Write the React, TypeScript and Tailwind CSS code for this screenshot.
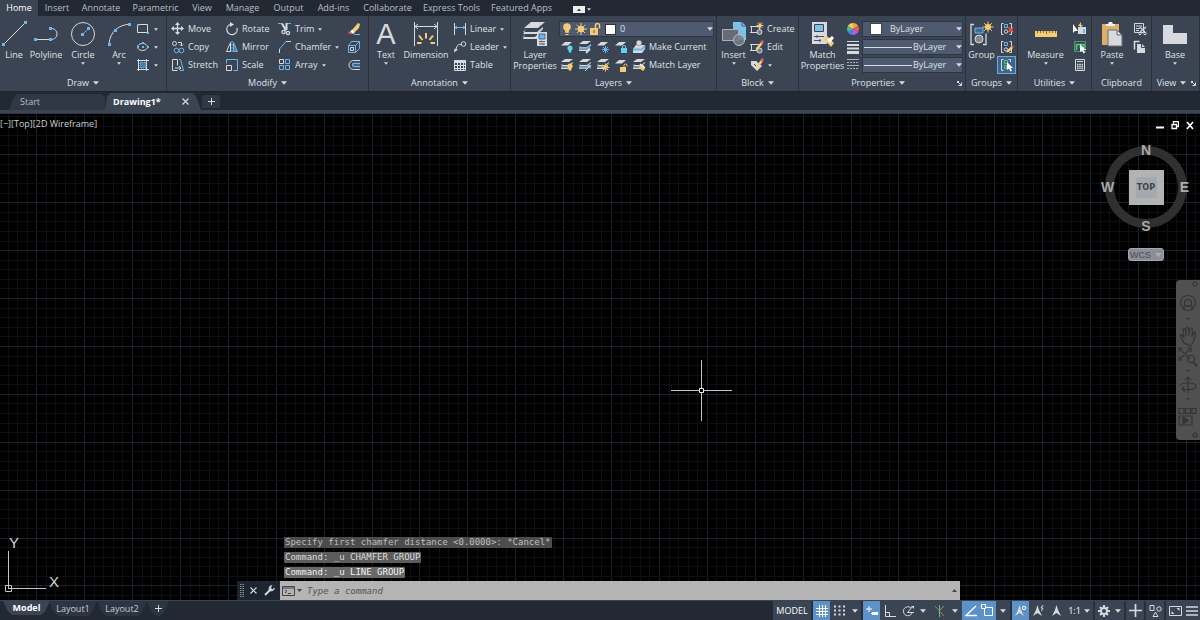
import React from 'react';

const W = '#d6d9dd';
const B = '#6fb5ea';
const Y = '#f6cb74';
const G = '#4ecb7d';

type IconProps = { w?: number; h?: number; children: React.ReactNode };

const Ico: React.FC<IconProps> = ({ w = 14, h = 14, children }) => (
  <svg width={w} height={h} viewBox={`0 0 ${w} ${h}`} fill="none" stroke={W} strokeWidth={1} className="shrink-0" aria-hidden="true">
    {children}
  </svg>
);

const Caret: React.FC<{ big?: boolean }> = ({ big }) => (
  <svg width={big ? 6 : 4} height={big ? 4 : 3} viewBox="0 0 6 3.5" className="shrink-0 fill-[#d6d9dd]" aria-hidden="true">
    <path d="M0 0h6L3 3.5z" />
  </svg>
);

const Launcher = () => (
  <Ico w={5} h={5}>
    <path d="M0 .5h2M.5 0v2M1 1l3 3M4.500 1.500V4.500H1.500" />
  </Ico>
);

/* ---------- small ribbon icons ---------- */

const dot = (x: number, y: number, s = 2) => <rect x={x - s / 2} y={y - s / 2} width={s} height={s} fill={B} stroke="none" />;

const sun = (cx: number, cy: number, r: number) => (
  <g stroke={Y}>
    <circle cx={cx} cy={cy} r={r * 0.55} fill={Y} stroke="none" />
    <path
      d={[0, 45, 90, 135, 180, 225, 270, 315]
        .map((a) => {
          const c = Math.cos((a * Math.PI) / 180);
          const s = Math.sin((a * Math.PI) / 180);
          return `M${cx + c * r * 0.5} ${cy + s * r * 0.5}L${cx + c * r} ${cy + s * r}`;
        })
        .join('')}
    />
  </g>
);

const stack = (
  <g fill={W} stroke="none">
    <path d="M5 1h8L9 4H1z" />
    <path d="M3 5.500 1 7h8l4-3v1L9 8.500H1z" />
    <path d="M1 9.500h8l3-2.500v1.500L9 11H1z" />
  </g>
);

const sheet = <path d="M5 2h7L8 5.500H1z" fill={W} stroke="none" />;

const bulb = (x: number, y: number, c: string, r = 2.6) => (
  <g fill={c} stroke="none">
    <circle cx={x} cy={y} r={r} />
    <rect x={x - r / 2} y={y + r - 1} width={r} height="3" />
  </g>
);

const lock = (x: number, y: number, c: string, open = false) => (
  <g stroke={c}>
    <rect x={x} y={y} width="6" height="5" fill={c} stroke="none" />
    <path d={open ? `M${x + 4} ${y}v-1.500a1.500 1.500 0 0 1 3 0v1` : `M${x + 1.5} ${y}v-1a1.500 1.500 0 0 1 3 0v1`} />
  </g>
);

const RectIcon = () => (
  <Ico>
    <path d="M1.500 2.500h10v8h-10z" />
    {dot(2, 3)}
    {dot(12, 11)}
  </Ico>
);

const EllipseIcon = () => (
  <Ico>
    <ellipse cx="6.500" cy="7" rx="5" ry="3.500" />
    {dot(2, 7)}
    {dot(12, 7)}
    {dot(7, 7)}
    {dot(7, 3)}
  </Ico>
);

const HatchIcon = () => (
  <Ico>
    <path d="M2.500 1v12M10.500 1v12M1 2.500h12M1 11.500h12" />
    <path d="M4 4h6v6H4z" fill="#4d7fab" stroke={B} strokeDasharray="1 1" />
  </Ico>
);

const MoveIcon = () => (
  <Ico>
    <path d="M6.500 2v10M2 6.500h10" strokeWidth="1.300" />
    <path d="M6.500 0 9 3H4zM6.500 13 9 10H4zM0 6.500 3 4v5zM13 6.500 10 4v5z" fill={W} stroke="none" />
  </Ico>
);

const CopyIcon = () => (
  <Ico>
    <circle cx="3.500" cy="3.500" r="2" />
    <path d="M7 2.500h3.500V6M9 4.500 10.500 6 12 4.500" />
    <circle cx="5.500" cy="10.500" r="2.300" stroke={B} />
    <circle cx="10.500" cy="10.500" r="2.300" stroke={B} />
  </Ico>
);

const StretchIcon = () => (
  <Ico>
    <path d="M1.500 1.500h5v6M1.500 1.500v11h5M4 10h6M8 8l2 2-2 2" />
    <path d="M8 1.500h1.500l3 11H9" stroke={B} />
  </Ico>
);

const RotateIcon = () => (
  <Ico>
    <path d="M5 2.500A5.200 5.200 0 1 0 12 6" strokeWidth="1.300" />
    <path d="M5 0v5l4-2.500z" fill={W} stroke="none" />
  </Ico>
);

const MirrorIcon = () => (
  <Ico>
    <path d="M5.500 2.500v9h-4z" />
    <path d="M8.500 2.500v9h4z" stroke={B} fill="#4d7fab" />
    <path d="M7 1v12" stroke={B} strokeDasharray="2 1" />
  </Ico>
);

const ScaleIcon = () => (
  <Ico>
    <path d="M1.500 5.500v-4h11v11h-4" stroke={B} />
    <path d="M1.500 7.500h5v5h-5z" />
  </Ico>
);

const TrimIcon = () => (
  <Ico>
    <path d="M0 1.500h4M9 1.500h4" stroke={B} />
    <path d="m4 1.500 4 7M8.500 1v7" strokeWidth="2" />
    <circle cx="5.500" cy="10" r="1.600" strokeWidth="1.300" />
    <circle cx="10" cy="11" r="1.600" strokeWidth="1.300" />
  </Ico>
);

const ChamferIcon = () => (
  <Ico>
    <path d="M1.500 13V9M8 1.500h5" />
    <path d="M1.500 9 8 1.500" stroke={B} />
  </Ico>
);

const ArrayIcon = () => (
  <Ico>
    <path d="M1.500 1.500h4v4h-4z" />
    <path d="M7.500 1.500h4v4h-4zM1.500 7.500h4v4h-4zM7.500 7.500h4v4h-4z" stroke={B} />
  </Ico>
);

const EraseIcon = () => (
  <Ico>
    <path d="m5 8 6-7 2 1-1 4-4 4z" fill={Y} stroke="none" />
    <path d="m5 7.500 3 2.500-2 2-4-1z" fill="#fff" stroke="none" />
    <path d="m3 9 3 3H3l-2-1z" fill="#e65c5c" stroke="none" />
    <path d="M7 12.500h6" stroke={B} />
  </Ico>
);

const ExplodeIcon = () => (
  <Ico>
    <path d="M1.500 5.500h7v7h-7zM4.500 1.500h8v7l-4 4M1.500 5.500l3-4M8.500 5.500l4-4" stroke={B} />
    <path d="M3.500 7.500h3v3h-3z" />
  </Ico>
);

const OffsetIcon = () => (
  <Ico>
    <path d="M13 2.500H6.500a4.500 4.500 0 0 0 0 9H13" />
    <path d="M13 5.500H7a1.500 1.500 0 0 0 0 3h6" stroke={B} strokeWidth="1.300" />
  </Ico>
);

const LinearIcon = () => (
  <Ico>
    <path d="M1.500 1v12M12.500 1v12" />
    <path d="M2 5.500h10M4 4 2 5.500 4 7M10 4l2 1.500L10 7" stroke={B} />
  </Ico>
);

const LeaderIcon = () => (
  <Ico>
    <circle cx="10.500" cy="4" r="2.300" />
    <path d="M8 4.500C5 4 4 5 3 10" />
    <path d="m1 12.500.5-4 3.500 1z" fill={W} stroke="none" />
  </Ico>
);

const TableIcon = () => (
  <Ico>
    <path d="M1.500 2.500h11v10h-11zM1.500 7.500h11M1.500 10.500h11M4.500 5v7.500M7.500 5v7.500M10.500 5v7.500" />
    <path d="M1.500 2.500h11v2h-11z" fill={W} />
  </Ico>
);

/* ---------- layer tool icons ---------- */

const layerTools: [string, React.ReactNode][][] = [
  [
    ['Layer off', <Ico key="a">{sheet}{bulb(10, 8, '#5fd0f0')}</Ico>],
    ['Isolate', <Ico key="b">{stack}<path d="M1 8h8l4-3" stroke={B} strokeWidth="1.500" /><path d="m8 13 4-4" strokeWidth="2" /></Ico>],
    ['Freeze', <Ico key="c">{sheet}<path d="M9.500 6v7M6 9.500h7M7 7l5 5M12 7l-5 5" stroke={B} /></Ico>],
    ['Lock layer', <Ico key="d">{sheet}{lock(7, 8, '#5fd0f0')}</Ico>],
  ],
  [
    ['Layer on', <Ico key="a">{stack}{bulb(10, 8, Y)}</Ico>],
    ['Unisolate', <Ico key="b">{stack}<path d="M1 10h8l4-3" stroke={B} strokeWidth="1.500" /><path d="m7 13 5-5M9.500 8H12v2.500" /></Ico>],
    ['Thaw', <Ico key="c">{stack}{sun(9.5, 9.5, 4)}</Ico>],
    ['Unlock layer', <Ico key="d">{sheet}{lock(6, 9, Y, true)}</Ico>],
  ],
];

const MakeCurrentIcon = () => (
  <Ico>
    <path d="M4 5h9l-3 4H1zM1 10h9l3-4v3l-3 4H1z" fill={W} stroke="none" />
    <path d="M1 9.500h9l3-3.500" stroke={B} strokeWidth="2" />
    <circle cx="7" cy="3" r="2.700" fill={W} stroke="#6b727d" strokeWidth=".5" />
  </Ico>
);

const MatchLayerIcon = () => (
  <Ico>
    {stack}
    <path d="m8 7 5 4-2 2-4-3z" fill={Y} stroke="none" />
    <path d="m8 6 5 4" stroke="#fff" strokeWidth="1.500" />
  </Ico>
);

/* ---------- block, group, utility icons ---------- */

const CreateIcon = () => (
  <Ico>
    <path d="M1.500 4.500h8v6h-8zM0 4.500h2M0 10.500h2" />
    <circle cx="9.500" cy="10" r="2.500" fill="#777d88" />
    {sun(10, 3.5, 3.4)}
  </Ico>
);

const Pencil = () => (
  <>
    <path d="m6 8 5-6 2 1.500-5 6L5.500 10z" fill={Y} stroke="none" />
    <path d="m10 2.500 2-2.500 2 1.500-2 2.500z" fill="#ef5f5f" stroke="none" />
  </>
);

const EditIcon = () => (
  <Ico>
    <path d="M1.500 4.500h7v6h-7zM0 4.500h2M0 10.500h2" />
    <circle cx="9.500" cy="10.500" r="2.500" fill="#777d88" />
    <Pencil />
  </Ico>
);

const AttributeIcon = () => (
  <Ico>
    <path d="M1 3h5l6 5-5 5-6-6z" fill={W} stroke="none" />
    <path d="m4 6 3 3 2-2" stroke="#3b4453" />
    <Pencil />
  </Ico>
);

const groupShape = (
  <>
    <path d="M3.500 1.500h-2v11h2M9.500 1.500h2v11h-2" />
    <path d="M4.500 2.500h3v3h-3z" stroke={B} />
    <circle cx="6" cy="9.500" r="1.700" />
  </>
);

const UngroupIcon = () => (
  <Ico>
    {groupShape}
    <path d="m8.500 5.500 4.500 4.500M13 5.500l-4.500 4.500" stroke="#ee5555" strokeWidth="1.700" />
  </Ico>
);

const GroupEditIcon = () => (
  <Ico>
    {groupShape}
    <path d="m7 10.500 4-4 2 1.500-4 4-2.500.5z" fill={Y} stroke="none" />
    <path d="m11 6.500 1-1 2 1.500-1 1z" fill="#ef5f5f" stroke="none" />
  </Ico>
);

const arrowCursor = <path d="M7 4v8l2-1.500 1.500 3 1.500-.7-1.500-2.800H13z" fill="#fff" stroke="none" />;

const GroupSelectIcon = () => (
  <Ico>
    <path d="M3.500 1.500h-2v11h2M8.500 1.500h2V4" />
    <path d="M4.500 2.500h3v3h-3zM4.500 7.500h2v3h-2z" stroke={G} />
    {arrowCursor}
  </Ico>
);

const QuickSelectIcon = () => (
  <Ico>
    <path d="M0 2v9l2-2h3z" fill="#fff" stroke="none" />
    <path d="M5 5h8v7H5z" fill={W} stroke="none" />
    <path d="M10 7h2v4h-2z" fill={B} stroke="none" />
    <path d="m8 0-3 4h2L6 7l4-4H8z" fill={Y} stroke="none" />
  </Ico>
);

const SelectAllIcon = () => (
  <Ico>
    <path d="M1.500 1.500h11v10h-11z" stroke={G} strokeDasharray="2 1" />
    <path d="M3.500 10V4.500h4V8M7 4.500h4V8" stroke={G} strokeWidth="1.700" />
    {arrowCursor}
  </Ico>
);

const CalculatorIcon = () => (
  <Ico>
    <path d="M2.500 1.500h9v11h-9zM4 3.500h6" />
    <path d="M4 6.500h6M4 8.500h6M4 10.500h6" strokeWidth="1.500" strokeDasharray="1.500 .75" />
  </Ico>
);

const CutIcon = () => (
  <Ico>
    <path d="M1.500 1.500h9v9h-9z" />
    <path d="M3 4h6M3 6.500h4M3 8.500h3" />
    <path d="m7 5 5 5M13 5l-6 5" strokeWidth="1.300" />
    <circle cx="7" cy="11.500" r="1.200" />
    <circle cx="12" cy="11.500" r="1.200" />
  </Ico>
);

const CopyClipIcon = () => (
  <Ico>
    <path d="M1.500 9.500v-8h5" strokeWidth="1.500" />
    <path d="M4 4h5l3 3v6H4z" fill={W} stroke="none" />
    <path d="M8.500 4v3.500H12" stroke="#3b4453" />
  </Ico>
);

/* ---------- large ribbon icons ---------- */

const LineBig = () => (
  <Ico w={26} h={26}>
    <path d="M2 24 24 2" />
    {dot(2.5, 23.5, 3)}
    {dot(24.5, 1.5, 3)}
  </Ico>
);

const PolylineBig = () => (
  <Ico w={26} h={26}>
    <path d="M2 18.500h16c8 0 8-11 0-11" />
    {dot(2.5, 18.5, 3)}
    {dot(17.5, 18.5, 3)}
    {dot(17.5, 7.5, 3)}
  </Ico>
);

const CircleBig = () => (
  <Ico w={26} h={26}>
    <circle cx="13" cy="13" r="11.500" />
    <path d="m13 13 5-5" stroke={B} />
    {dot(12.5, 13.5, 3)}
    {dot(18.5, 7.5, 3)}
  </Ico>
);

const ArcBig = () => (
  <Ico w={26} h={26}>
    <path d="M3 23C4 11 12 4 24 3" />
    {dot(3.5, 23.5, 3)}
    {dot(9.5, 9.5, 3)}
    {dot(23.5, 3.5, 3)}
  </Ico>
);

const DimensionBig = () => (
  <Ico w={26} h={26}>
    <path d="M1.500 1v24M24.500 1v24M2 5.500h22M5 3 2 5.500 5 8M21 3l3 2.500L21 8" />
    <path d="M13 17.500V12M9.500 19 6 14.500M16.500 19l3.500-4.500M8.500 22H4M17.500 22H22" stroke={Y} strokeWidth="2" />
  </Ico>
);

const LayersBig = () => (
  <Ico w={26} h={26}>
    <g fill={W} stroke="none">
      <path d="M9 1h14l-7 6H2z" />
      <path d="m4 8-3 3h14l6-5v2l-5 5H1z" />
      <path d="m3 13-2 3h12l4-4h3l-5 6H1z" />
    </g>
    <path d="M15 11h10v14H15z" fill={W} stroke="none" />
    <path d="M17 13h6v5h-6z" fill={B} stroke="#4a6c8c" />
    <path d="M17 20.500h6M17 23h6M19 19.500v2M21 22v2" stroke="#59606b" />
  </Ico>
);

const InsertBig = () => (
  <Ico w={26} h={26}>
    <path d="M12 1h9l4 4v14H12z" fill="#7cc0ec" stroke="none" />
    <path d="M21 1v4h4" stroke="#3b5f80" />
    <path d="M1.500 8.500h16v11h-16z" fill="#666b76" stroke="#aab0b8" />
    <circle cx="18" cy="19" r="5.500" fill="#777c86" stroke="#bcc0c6" fillOpacity="0.85" />
  </Ico>
);

const MatchBig = () => (
  <Ico w={26} h={26}>
    <path d="M2 1h15v22H2z" fill={W} stroke="none" />
    <path d="M4.500 3.500h9v7h-9z" fill="#7cc0ec" stroke="#3b4453" />
    <path d="M4 15.500h10M4 19.500h7M7 14v3M10 18v3" stroke="#4c535f" />
    <path d="m13 17 4-2 7 7-3 4z" fill={Y} stroke="none" />
    <path d="m17 19 5-4 2 2-4 5z" fill="#fff" stroke="none" />
  </Ico>
);

const GroupBig = () => (
  <Ico w={26} h={26}>
    <path d="M5 3.500H2v20h3M14 23.500h3v-11" strokeWidth="1.300" />
    <path d="M6 7h8v5H6z" stroke={B} fill="#426a90" />
    <circle cx="10" cy="18" r="4" fill="#858a92" />
    {sun(19, 6, 5.5)}
  </Ico>
);

const MeasureBig = () => (
  <Ico w={26} h={26}>
    <path d="M2 10h22v6H2z" fill={Y} stroke="none" />
    <path d="M4.500 10v2M7.500 10v2M10.500 10v2M13.500 10v3M16.500 10v2M19.500 10v2M22.500 10v2" stroke="#8a6a2d" />
  </Ico>
);

const PasteBig = () => (
  <Ico w={26} h={26}>
    <path d="M3 3h17v21H3z" fill="#dfae68" stroke="none" />
    <path d="M7 5V3h2l1-2h3l1 2h2v2z" fill="#eee" stroke="none" />
    <path d="M9 9h9l5 5v11H9z" fill={W} stroke="#6b6f76" />
    <path d="M18 9v5h5" stroke="#6b6f76" />
  </Ico>
);

const BaseBig = () => (
  <Ico w={26} h={26}>
    <path d="M1 4h10v8h14v11H1z" fill={W} stroke="none" />
  </Ico>
);

/* ---------- ribbon building blocks ---------- */

type PanelProps = { title: string; width: string; launcher?: boolean; plain?: boolean; children: React.ReactNode };

const Panel: React.FC<PanelProps> = ({ title, width, launcher, plain, children }) => (
  <section className={`${width} shrink-0 flex flex-col border-r border-[#29303b] overflow-hidden`}>
    <div className="flex h-[56px] mt-1">{children}</div>
    <div className="flex items-center h-[14px]">
      <button className="flex flex-1 items-center justify-center gap-1 leading-3">
        {title}
        {!plain && <Caret big />}
      </button>
      {launcher && <button aria-label={`${title} settings`} className="pr-[3px]"><Launcher /></button>}
    </div>
  </section>
);

type BigProps = { icon: React.ReactNode; label: string; width: string; arrow?: boolean };

const Big: React.FC<BigProps> = ({ icon, label, width, arrow }) => (
  <button className={`${width} shrink-0 flex flex-col items-center justify-start leading-[11px]`}>
    <span className="flex h-[28px] items-center">{icon}</span>
    <span className="mt-px whitespace-pre-line text-center">{label}</span>
    {arrow && <span className="mt-[2px]"><Caret /></span>}
  </button>
);

type SmallProps = { icon: React.ReactNode; label?: string; name?: string; arrow?: boolean };

const Small: React.FC<SmallProps> = ({ icon, label, name, arrow }) => (
  <button aria-label={label ?? name} className="flex h-[18px] items-center whitespace-nowrap">
    {icon}
    {label && <span className="ml-[3px]">{label}</span>}
    {arrow && <span className="ml-1"><Caret /></span>}
  </button>
);

const boxStyle = 'flex items-center h-4 bg-[#4d5a6f] border border-[#2e3642]';

const PropertySelect: React.FC<{ name: string; swatch?: boolean }> = ({ name, swatch }) => (
  <label className={boxStyle}>
    {swatch ? <span className="ml-[7px] mr-2 size-3 bg-white border border-[#444]" /> : <span className="ml-px mr-px w-12 h-px bg-[#d6d9dd]" />}
    <select aria-label={name} className="flex-1 min-w-0 appearance-none bg-transparent outline-none">
      <option>ByLayer</option>
    </select>
    <Caret big />
  </label>
);

const Ribbon = () => (
  <div className="flex h-[75px] shrink-0 overflow-hidden bg-[#3b4453] text-[#dfe2e6]">
    <Panel title="Draw" width="w-[167px]">
      <Big icon={<LineBig />} label="Line" width="w-7" />
      <Big icon={<PolylineBig />} label="Polyline" width="w-9" />
      <Big icon={<CircleBig />} label="Circle" width="w-[38px]" arrow />
      <Big icon={<ArcBig />} label="Arc" width="w-[34px]" arrow />
      <div>
        <Small icon={<RectIcon />} name="Rectangle" arrow />
        <Small icon={<EllipseIcon />} name="Ellipse" arrow />
        <Small icon={<HatchIcon />} name="Hatch" arrow />
      </div>
    </Panel>

    <Panel title="Modify" width="w-[202px]">
      <div className="w-[54px] ml-1">
        <Small icon={<MoveIcon />} label="Move" />
        <Small icon={<CopyIcon />} label="Copy" />
        <Small icon={<StretchIcon />} label="Stretch" />
      </div>
      <div className="w-[53px]">
        <Small icon={<RotateIcon />} label="Rotate" />
        <Small icon={<MirrorIcon />} label="Mirror" />
        <Small icon={<ScaleIcon />} label="Scale" />
      </div>
      <div className="w-[69px]">
        <Small icon={<TrimIcon />} label="Trim" arrow />
        <Small icon={<ChamferIcon />} label="Chamfer" arrow />
        <Small icon={<ArrayIcon />} label="Array" arrow />
      </div>
      <div>
        <Small icon={<EraseIcon />} name="Erase" />
        <Small icon={<ExplodeIcon />} name="Explode" />
        <Small icon={<OffsetIcon />} name="Offset" />
      </div>
    </Panel>

    <Panel title="Annotation" width="w-[142px]">
      <Big
        icon={<span className="font-['Liberation_Sans',sans-serif] text-[29px] leading-7 text-[#d6d9dd]">A</span>}
        label="Text"
        width="w-[34px]"
        arrow
      />
      <Big icon={<DimensionBig />} label="Dimension" width="w-[46px]" />
      <div className="ml-1">
        <Small icon={<LinearIcon />} label="Linear" arrow />
        <Small icon={<LeaderIcon />} label="Leader" arrow />
        <Small icon={<TableIcon />} label="Table" />
      </div>
    </Panel>

    <Panel title="Layers" width="w-[206px]">
      <Big icon={<LayersBig />} label={'Layer\nProperties'} width="w-12" />
      <div className="flex-1 mr-[2px]">
        <label className={`${boxStyle} my-px`}>
          <Ico>{bulb(7, 5, Y, 3.8)}<path d="M5.500 12.500h3" stroke={Y} /></Ico>
          <Ico>{sun(7, 7, 6)}</Ico>
          <Ico><path d="M2 6h8v7H2z" fill={Y} stroke="none" /><path d="M7.500 6V3.500a2 2 0 0 1 4 0v3" stroke={Y} strokeWidth="1.500" /><path d="M6 8v3" stroke="#4d5a6f" /></Ico>
          <span className="ml-[3px] size-[11px] bg-white border border-[#333]" />
          <select aria-label="Current layer" className="flex-1 min-w-0 pl-1 appearance-none bg-transparent outline-none">
            <option>0</option>
          </select>
          <Caret big />
        </label>
        <div className="flex items-center">
          {layerTools[0].map(([name, icon]) => (
            <button key={name} aria-label={name} className="flex w-[18px] pl-px">{icon}</button>
          ))}
          <span className="pl-px"><Small icon={<MakeCurrentIcon />} label="Make Current" /></span>
        </div>
        <div className="flex items-center">
          {layerTools[1].map(([name, icon]) => (
            <button key={name} aria-label={name} className="flex w-[18px] pl-px">{icon}</button>
          ))}
          <span className="pl-px"><Small icon={<MatchLayerIcon />} label="Match Layer" /></span>
        </div>
      </div>
    </Panel>

    <Panel title="Block" width="w-[82px]">
      <Big icon={<InsertBig />} label="Insert" width="w-[33px]" arrow />
      <div>
        <Small icon={<CreateIcon />} label="Create" />
        <Small icon={<EditIcon />} label="Edit" />
        <Small icon={<AttributeIcon />} name="Edit attributes" arrow />
      </div>
    </Panel>

    <Panel title="Properties" width="w-[167px]" launcher>
      <Big icon={<MatchBig />} label={'Match\nProperties'} width="w-[47px]" />
      <div className="flex flex-col justify-between w-4 pt-[2px] pb-[5px]">
        <Ico>
          <g stroke="none">
            <path d="M7 7V1a6 6 0 0 1 5.200 3z" fill="#f6a04d" />
            <path d="m7 7 5.200-3a6 6 0 0 1 0 6z" fill="#ef5b50" />
            <path d="m7 7 5.200 3A6 6 0 0 1 7 13z" fill="#b95be0" />
            <path d="M7 7v6a6 6 0 0 1-5.200-3z" fill="#4e7df0" />
            <path d="m7 7-5.200 3a6 6 0 0 1 0-6z" fill="#3fc08f" />
            <path d="M7 7 1.800 4A6 6 0 0 1 7 1z" fill="#f2cf5b" />
          </g>
        </Ico>
        <Ico>
          <path d="M1 1.500h12" />
          <path d="M1 5h12" strokeWidth="2" />
          <path d="M1 8.500h12" strokeWidth="2" />
          <path d="M1 12.500h12" strokeWidth="3" />
        </Ico>
        <Ico>
          <path d="M1 2.500h12M1 8.500h12" stroke="#aab0b8" />
          <path d="M1 5.500h12M1 11.500h12" strokeDasharray="2 1" stroke="#aab0b8" />
        </Ico>
      </div>
      <div className="flex-1 flex flex-col gap-[2px] mt-px mr-[2px]">
        <PropertySelect name="Object color" swatch />
        <PropertySelect name="Lineweight" />
        <PropertySelect name="Linetype" />
      </div>
    </Panel>

    <Panel title="Groups" width="w-[52px]">
      <Big icon={<GroupBig />} label="Group" width="w-[31px]" />
      <div className="w-[19px]">
        <span className="flex pl-[3px]"><Small icon={<UngroupIcon />} name="Ungroup" /></span>
        <span className="flex pl-[3px]"><Small icon={<GroupEditIcon />} name="Group edit" /></span>
        <span className="flex pl-[2px] border border-[#6fa9dc] bg-[#40658a] h-[18px] items-center">
          <Small icon={<GroupSelectIcon />} name="Group selection" />
        </span>
      </div>
    </Panel>

    <Panel title="Utilities" width="w-[74px]">
      <Big icon={<MeasureBig />} label="Measure" width="w-[55px]" arrow />
      <div>
        <Small icon={<QuickSelectIcon />} name="Quick select" />
        <Small icon={<SelectAllIcon />} name="Select all" />
        <Small icon={<CalculatorIcon />} name="Calculator" />
      </div>
    </Panel>

    <Panel title="Clipboard" width="w-[60px]" plain>
      <Big icon={<PasteBig />} label="Paste" width="w-10" arrow />
      <div className="ml-px">
        <Small icon={<CutIcon />} name="Cut" />
        <Small icon={<CopyClipIcon />} name="Copy clip" />
      </div>
    </Panel>

    <Panel title="View" width="w-[48px]" launcher>
      <Big icon={<BaseBig />} label="Base" width="w-[46px]" arrow />
    </Panel>
  </div>
);

/* ---------- top menu and file tabs ---------- */

const MENU: [string, string][] = [
  ['Insert', 'w-[38px]'],
  ['Annotate', 'w-[50px]'],
  ['Parametric', 'w-[59px]'],
  ['View', 'w-[34px]'],
  ['Manage', 'w-[47px]'],
  ['Output', 'w-[45px]'],
  ['Add-ins', 'w-[45px]'],
  ['Collaborate', 'w-[63px]'],
  ['Express Tools', 'w-[65px]'],
  ['Featured Apps', 'w-[75px]'],
];

const MenuBar = () => (
  <nav className="flex h-4 shrink-0 items-center bg-[#222933] text-[#b9bfc8] whitespace-nowrap">
    <button className="h-4 w-[38px] bg-[#3b4453] text-white">Home</button>
    {MENU.map(([item, width]) => (
      <button key={item} className={`h-4 ${width}`}>{item}</button>
    ))}
    <button aria-label="Ribbon display" className="ml-[14px] mt-[2px] flex items-center gap-[2px]">
      <Ico w={12} h={7}>
        <path d="M0 0h12v7H0z" fill="#eee" stroke="none" />
        <path d="M4 5h4L6 2.500z" fill="#333" stroke="none" />
      </Ico>
      <Caret />
    </button>
  </nav>
);

const FileTabs = () => (
  <div className="flex h-[19px] shrink-0 items-end border-t border-[#1d232c] bg-[#222933] text-[#b9bfc8]">
    <button className="ml-[9px] h-4 w-[96px] pl-[11px] text-left bg-[#303846] [clip-path:polygon(0_100%,4px_30%,8px_0,92px_0,96px_20%,96px_100%)]">Start</button>
    <div className="flex h-[17px] w-[96px] items-center justify-between pl-2 pr-3 bg-[#3b4453] text-white font-bold [clip-path:polygon(0_100%,2px_20%,5px_0,88px_0,91px_20%,96px_100%)]">
      <button>Drawing1*</button>
      <button aria-label="Close drawing">
        <Ico w={7} h={7}><path d="m.5.500 6 6M6.500.500l-6 6" strokeWidth="1.200" /></Ico>
      </button>
    </div>
    <button aria-label="New drawing" className="flex h-[13px] w-[18px] mb-[2px] items-center justify-center bg-[#303846] ml-[1px] rounded-t">
      <Ico w={7} h={7}><path d="M3.500 0v7M0 3.500h7" /></Ico>
    </button>
  </div>
);

/* ---------- drawing area ---------- */

const GRID = 9.58;
const columns = Array.from({ length: 260 }, (_, i) => i);

const Grid = () => (
  <svg className="absolute inset-0 size-full" aria-hidden="true" shapeRendering="crispEdges">
    {columns.map((i) => {
      const x = Math.floor(8 + i * GRID);
      return <path key={i} d={`M${x}.5 0v2000`} stroke={i % 5 === 3 ? '#1c222d' : '#0d0f13'} />;
    })}
    {columns.slice(0, 150).map((i) => {
      const y = Math.round(2 + i * GRID);
      return <path key={i} d={`M0 ${y}.5h2600`} stroke={i % 5 === 4 ? '#1c222d' : '#0d0f13'} />;
    })}
  </svg>
);

const ViewCube = () => (
  <div className="absolute right-[9px] top-[28px] w-[90px] flex flex-col items-center">
    <div className="relative grid size-[90px] place-items-center">
      <svg className="absolute inset-0" width="90" height="90" fill="none" aria-hidden="true">
        <circle cx="45" cy="45" r="36.500" stroke="#303030" strokeWidth="9" />
      </svg>
      <button className="relative grid size-[35px] place-items-center bg-[#b3b3b3] font-bold text-[#404348]">
        <span className="grid size-[21px] place-items-center bg-[#a5a9af] font-['Liberation_Sans_Narrow','DejaVu_Sans_Condensed',sans-serif]">TOP</span>
      </button>
      <div className="absolute inset-0 font-['Liberation_Sans',sans-serif] text-[14px] leading-4 font-bold text-[#a9a9a9]">
        <span className="absolute inset-x-0 top-0 text-center">N</span>
        <span className="absolute inset-x-0 bottom-[-2px] text-center">S</span>
        <span className="absolute left-0 top-[37px]">W</span>
        <span className="absolute right-[2px] top-[37px]">E</span>
      </div>
    </div>
    <button className="mt-4 flex h-[13px] w-9 items-center justify-between rounded-[3px] border border-[#a4a7ad] bg-[#8b8e96] px-px font-['Liberation_Sans',sans-serif] leading-3 text-[#4a4c52]">
      WCS
      <svg width="7" height="4" className="fill-[#a9acb3]" aria-hidden="true"><path d="M0 0h7L3.500 4z" /></svg>
    </button>
  </div>
);

const NavBar = () => (
  <div className="absolute right-0 top-[166px] w-6 h-[160px] rounded-l bg-[#505050]">
    <svg width="24" height="160" fill="none" stroke="#343434" strokeWidth="1.200" aria-hidden="true">
      <circle cx="19" cy="4" r="2" />
      <circle cx="12" cy="23" r="7.500" />
      <circle cx="12" cy="23" r="3.500" />
      <path d="M8 30v-4h8v4" />
      <path d="M10 38h4l-2 2zM10 90h4l-2 2zM10 118h4l-2 2z" fill="#343434" stroke="none" />
      <path d="M8 63c-1-3-4-6-4-8 2-1 3 1 4 3l-1-9c2-1 3 1 3 7 0-5 0-9 1-9 2 0 2 4 2 9 0-4 1-8 3-8 1 1 0 4 0 9 1-3 2-6 3-5 1 2-1 10-4 14z" />
      <path d="m4 69 10 10M14 69 4 79M3 72v-4h4M11 68h4v4M3 76v4h4" />
      <circle cx="15" cy="79" r="3.500" />
      <path d="m17 82 4 4" strokeWidth="2" />
      <path d="M12 97v16M9 100l3-3 3 3M4 106c0-4 16-4 16 0s-9 4-13 3M8 106l-2 3 3 3" />
      <path d="M3 128.500h5v5H3zM9.500 128.500h5v5h-5zM16 128.500h4v5h-4zM3 136h13v9H3z" />
      <path d="m7 137 5 3.500-5 3.500z" fill="#343434" />
      <circle cx="19" cy="155" r="2" />
    </svg>
  </div>
);

const HISTORY: [string, string][] = [
  ['Specify first chamfer distance <0.0000>: *Cancel*', 'bg-[#4c4c4c] text-[#bdbdbd]'],
  ['Command: _u CHAMFER GROUP', 'bg-[#5c5c5c] text-[#dadada]'],
  ['Command: _u LINE GROUP', 'bg-[#686868] text-[#f2f2f2]'],
];

const CommandLine = () => (
  <div className="absolute bottom-0 left-[237px] right-[240px] font-['DejaVu_Sans_Mono',monospace]">
    <div className="ml-[47px] mb-[3px] flex flex-col items-start gap-1">
      {HISTORY.map(([text, tone]) => (
        <p key={text} className={`${tone} h-[11px] px-px leading-[11px] whitespace-pre rounded-[1px]`}>{text}</p>
      ))}
    </div>
    <div className="flex h-[19px]">
      <div className="flex w-[43px] items-center justify-between bg-[#1e2530] pl-[3px] pr-[5px]">
        <svg width="4" height="13" stroke="#8e939b" strokeDasharray="1 1" aria-hidden="true"><path d="M.5 0v13M3.500 0v13M2 0v13" /></svg>
        <button aria-label="Close command line">
          <Ico w={7} h={7}><path d="m.5.500 6 6M6.500.500l-6 6" strokeWidth="1.200" /></Ico>
        </button>
        <button aria-label="Customize" className="ml-[2px]">
          <Ico w={11} h={11}>
            <path d="m1 10 5.500-5.500" strokeWidth="2" />
            <path d="M10.500 3 8.500 4.500 6.500 3 8 .500C6 .500 4.500 2 5 4.500S10.500 6.500 10.500 3z" fill={W} strokeWidth=".5" />
          </Ico>
        </button>
      </div>
      <div className="flex flex-1 items-center gap-[2px] bg-[#b4b4b4] pl-[2px] pr-[3px]">
        <svg width="13" height="10" fill="none" stroke="#444" aria-hidden="true">
          <path d="M.5.500h12v9H.5zM.5 2h12M3 4l2 1.500L3 7M6 7.500h3" />
        </svg>
        <svg width="5" height="3" fill="#444" aria-hidden="true"><path d="M0 0h5L2.500 3z" /></svg>
        <input aria-label="Command" placeholder="Type a command" className="ml-[3px] flex-1 min-w-0 bg-transparent italic outline-none placeholder:text-[#555]" />
        <svg width="5" height="3" fill="#444" aria-hidden="true"><path d="M0 3h5L2.500 0z" /></svg>
      </div>
    </div>
  </div>
);

const Canvas = () => (
  <main className="relative flex-1 overflow-hidden bg-black text-[#d0d0d0]">
    <Grid />
    <p className="absolute left-0 top-1 leading-3">[−][Top][2D Wireframe]</p>
    <div className="absolute right-[6px] top-[7px] flex gap-[7px]">
      <button aria-label="Minimize"><Ico w={8} h={9}><path d="M0 6.500h8" strokeWidth="2" stroke="#fff" /></Ico></button>
      <button aria-label="Restore">
        <Ico w={8} h={9}><path d="M2.500 2.500v-2h5v5h-2M1 3.500h4.500v4H1z" stroke="#fff" strokeWidth="1.300" /></Ico>
      </button>
      <button aria-label="Close view"><Ico w={8} h={9}><path d="m1 1 6 7M7 1 1 8" stroke="#fff" strokeWidth="1.700" /></Ico></button>
    </div>
    <ViewCube />
    <NavBar />

    {/* cursor */}
    <svg className="absolute left-[671px] top-[246px]" width="61" height="61" fill="none" stroke="#c4c4c4" aria-hidden="true">
      <path d="M30.500 0v28M30.500 33v28M0 30.500h28M33 30.500h28" />
      <path d="M28.500 28.500h4v4h-4z" stroke="#f0f0f0" />
    </svg>

    {/* UCS icon */}
    <svg className="absolute left-0 bottom-0" width="64" height="66" fill="none" stroke="#c4c4c4" aria-hidden="true">
      <path d="M8.500 17v38M9 54.500h37M5.500 51.500h6v6h-6z" />
      <text x="9" y="14" fill="#d8d8d8" stroke="none" fontSize="15" fontFamily="Liberation Sans, sans-serif">Y</text>
      <text x="49" y="53" fill="#d8d8d8" stroke="none" fontSize="15" fontFamily="Liberation Sans, sans-serif">X</text>
    </svg>
    <CommandLine />
  </main>
);

/* ---------- status bar ---------- */

type CellProps = { name: string; width?: string; on?: boolean; gap?: boolean; children: React.ReactNode };

const Cell: React.FC<CellProps> = ({ name, width = 'w-[18px]', on, gap, children }) => (
  <button
    aria-label={name}
    className={`${width} ${on ? 'bg-[#5d92c8]' : ''} ${gap ? 'border-l-2 border-[#29303b]' : ''} box-content flex h-full shrink-0 items-center justify-center gap-[3px]`}
  >
    {children}
  </button>
);

const person = <path d="M5.500 0 7 5l3 6-4.500-3L1 11l3-6z" fill={W} stroke="none" />;

const LAYOUT_TAB = 'h-[15px] bg-[#2e3542] [clip-path:polygon(0_0,100%_0,calc(100%-5px)_75%,calc(100%-9px)_100%,9px_100%,5px_75%)]';

const StatusBar = () => (
  <footer className="flex h-5 shrink-0 justify-between border-t border-[#3b4453] bg-[#222933] text-[#c6cbd2] whitespace-nowrap">
    <div className="flex pl-[3px]">
      <button className="h-[14px] w-[47px] bg-[#3b4453] font-bold text-white [clip-path:polygon(0_0,100%_0,calc(100%-5px)_75%,calc(100%-9px)_100%,9px_100%,5px_75%)]">Model</button>
      <button className={`${LAYOUT_TAB} w-[48px] -ml-px`}>Layout1</button>
      <button className={`${LAYOUT_TAB} w-[50px]`}>Layout2</button>
      <button aria-label="New layout" className={`${LAYOUT_TAB} w-[22px] flex items-center justify-center`}>
        <Ico w={7} h={7}><path d="M3.500 0v7M0 3.500h7" /></Ico>
      </button>
    </div>
    <div className="flex items-center bg-[#3b4453] text-white">
      <Cell name="Model space" width="w-[38px]">MODEL</Cell>
      <Cell name="Grid" width="w-[17px]" on gap>
        <Ico w={12} h={12}><path d="M3.500 0v12M6.500 0v12M9.500 0v12M0 3.500h12M0 6.500h12M0 9.500h12" stroke="#fff" /></Ico>
      </Cell>
      <Cell name="Snap"><Ico w={11} h={11}><path d="M0 1.500h11M0 5.500h11M0 9.500h11" strokeWidth="2" strokeDasharray="2 2.500" /></Ico></Cell>
      <Cell name="Snap options" width="w-[13px]"><Caret big /></Cell>
      <Cell name="Dynamic input" width="w-[17px]" on gap>
        <Ico w={12} h={12}><path d="M3 1v6M0 4h6M5 8.500h7" stroke="#fff" /><path d="M6 7h6v3H6z" fill="#fff" stroke="none" /></Ico>
      </Cell>
      <Cell name="Ortho" width="w-5"><Ico w={12} h={12}><path d="M1.500 0v11.500H12M1.500 7.500h4v4" /></Ico></Cell>
      <Cell name="Polar" width="w-4">
        <Ico w={13} h={12}><path d="M9 3a4.500 4.500 0 1 0 1 5M5.500 7.500H12M5.500 7.500 11 1" /><path d="M9 1h3v3z" fill={W} stroke="none" /></Ico>
      </Cell>
      <Cell name="Polar options" width="w-[14px]"><Caret big /></Cell>
      <Cell name="Isodraft"><Ico w={12} h={12}><path d="m2 1 9 10" stroke="#d0605c" /><path d="M6.500 0v12" stroke={G} /><path d="m11 1-4 4" stroke="#8b919b" /></Ico></Cell>
      <Cell name="Isodraft options" width="w-[14px]"><Caret big /></Cell>
      <Cell name="Object tracking" width="w-[17px]" on><Ico w={12} h={12}><path d="M11 1 1 10.500h11" stroke="#fff" strokeWidth="1.300" /></Ico></Cell>
      <Cell name="Object snap" width="w-[17px]" on>
        <Ico w={13} h={13}><path d="M3.500 3.500h8v8h-8z" stroke="#fff" /><path d="M.5.500h4v4h-4z" fill="#5d92c8" stroke="#fff" /></Ico>
      </Cell>
      <Cell name="Snap list" width="w-[14px]"><Caret big /></Cell>
      <Cell name="Annotation visibility" width="w-[17px]" on gap>
        <Ico w={13} h={12}>{person}<circle cx="10" cy="3" r="1.700" stroke="#fff" /></Ico>
      </Cell>
      <Cell name="Auto scale"><Ico w={13} h={12}>{person}<path d="m11 0-2 3h2L9.500 6" /></Ico></Cell>
      <Cell name="Annotation scale"><Ico w={11} h={12}>{person}</Ico></Cell>
      <Cell name="Scale" width="w-7">1:1<Caret big /></Cell>
      <Cell name="Workspace" width="w-[17px]" gap>
        <Ico w={12} h={12}>
          <circle cx="6" cy="6" r="3" strokeWidth="2" />
          <path d="M6 0v2M6 10v2M0 6h2M10 6h2M2 2l1.500 1.500M8.500 8.500 10 10M10 2 8.500 3.500M3.500 8.500 2 10" strokeWidth="2" />
        </Ico>
      </Cell>
      <Cell name="Workspace options" width="w-3"><Caret big /></Cell>
      <Cell name="Annotation monitor" gap><Ico w={13} h={13}><path d="M6.500 0v13M0 6.500h13" strokeWidth="1.700" /></Ico></Cell>
      <Cell name="Isolate objects" gap>
        <Ico w={13} h={13}><path d="M1 1.500h4v5H1zM6.500 8l2.500 4.500H4z" /><circle cx="10" cy="5" r="2.200" /></Ico>
      </Cell>
      <Cell name="Clean screen" gap>
        <Ico w={13} h={12}><path d="M.5 1.500h12v9H.5z" /><path d="M10.500 3v3l-3-3zM2.500 9V6l3 3z" fill={W} stroke="none" /></Ico>
      </Cell>
      <Cell name="Customization" width="w-4"><Ico w={12} h={12}><path d="M0 2h12M0 6h12M0 10h12" strokeWidth="1.500" /></Ico></Cell>
    </div>
  </footer>
);

export default function App() {
  return (
    <div className="flex h-screen flex-col overflow-hidden bg-[#222933] font-['Open_Sans','Noto_Sans',sans-serif] text-[9px] leading-3">
      <MenuBar />
      <Ribbon />
      <FileTabs />
      <div className="h-1 shrink-0 border-b border-[#2e3643] bg-[#3b4453]" />
      <Canvas />
      <StatusBar />
    </div>
  );
}
